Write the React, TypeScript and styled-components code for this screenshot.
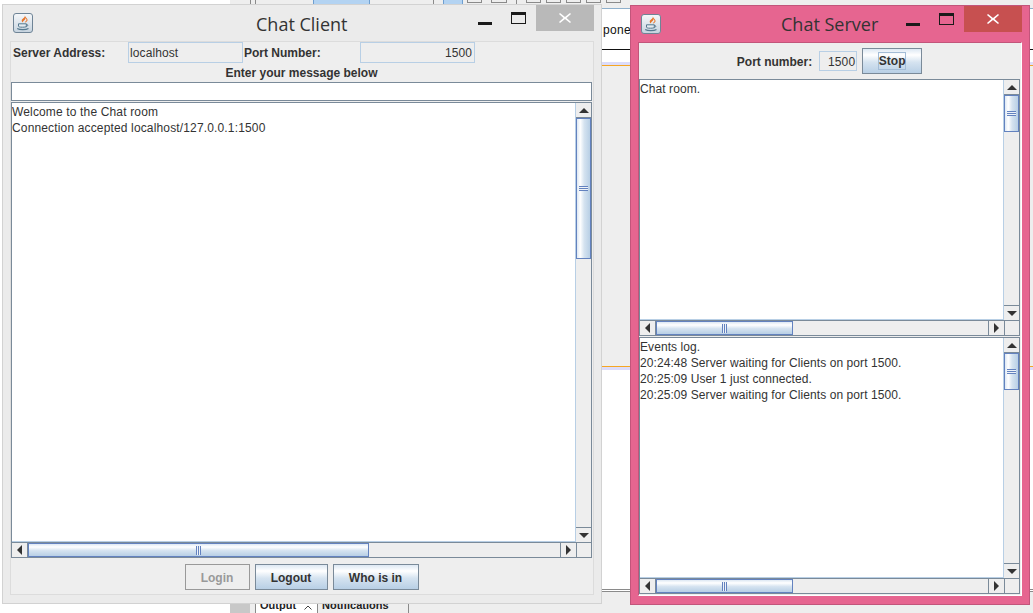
import React, { FC, ReactNode } from 'react';
import styled, { createGlobalStyle } from 'styled-components';

const GlobalStyle = createGlobalStyle`
    html, body {
        margin: 0;
        padding: 0;
        background: #fff;
        overflow: hidden;
    }
    * {
        box-sizing: border-box;
    }
`;

const JavaIcon: FC = () => (
    <svg width="20" height="20" viewBox="0 0 20 20">
        <defs>
            <linearGradient id="javaBg" x1="0" y1="0" x2="0" y2="1">
                <stop offset="0" stopColor="#f6f8fa" />
                <stop offset="1" stopColor="#c6d3df" />
            </linearGradient>
        </defs>
        <rect x="0.5" y="0.5" width="19" height="19" rx="2.500" fill="url(#javaBg)" stroke="#6f8496" />
        <path d="M11.800 2.500c.8 2.200-3.800 3.300-3 5.700.2.600.6 1 1 1.300-.3-1.700 3.600-2.700 2.200-4.800.9 1.300 2 1.800 1.500 2.500-.8 1-1.500 1.500-1.700 2.400 1.500-.5 3.400-1.800 2.600-3.400-.5-1-1.800-1.800-2.600-3.700z" fill="#e8762b" />
        <path d="M5.500 10.800h7.800v2.200c0 .8-1 1.200-3.900 1.200s-3.900-.4-3.900-1.200z" fill="#e4ebf1" stroke="#55798f" strokeWidth="1" />
        <path d="M13.300 11.300c2 0 2 2-.5 2.500" fill="none" stroke="#55798f" strokeWidth="1" />
        <path d="M4.200 15.500c2.500 1.500 8.800 1.500 11.300 0" fill="none" stroke="#55798f" strokeWidth="1.300" />
    </svg>
);

const MinimizeIcon: FC = () => (
    <svg width="14" height="3" viewBox="0 0 14 3">
        <rect width="14" height="3" fill="#1a1a1a" />
    </svg>
);

const MaximizeIcon: FC = () => (
    <svg width="15" height="12" viewBox="0 0 15 12">
        <path d="M0 0h15v12H0zM1 3v8h13V3z" fill="#1a1a1a" fillRule="evenodd" />
    </svg>
);

const CloseIcon: FC = () => (
    <svg width="12" height="10" viewBox="0 0 12 10">
        <path d="M1 0l5 4 5-4 1 1-4.500 4L12 9l-1 1-5-4-5 4-1-1 4.500-4L0 1z" fill="#fff" />
    </svg>
);

const CaretIcon: FC = () => (
    <svg width="8" height="5" viewBox="0 0 8 5">
        <polyline points="0.500,4.500 4,1 7.500,4.500" fill="none" stroke="#444" strokeWidth="1" />
    </svg>
);

type ArrowDir = 'up' | 'down' | 'left' | 'right';

const Arrow: FC<{ dir: ArrowDir }> = ({ dir }) => {
    const points = {
        up: '0,6 5,1 10,6',
        down: '0,1 10,1 5,6',
        left: '6,0 6,10 1,5',
        right: '1,0 1,10 6,5',
    }[dir];
    const vertical = dir === 'up' || dir === 'down';
    return (
        <svg width={vertical ? 10 : 7} height={vertical ? 7 : 10} viewBox={vertical ? '0 0 10 7' : '0 0 7 10'}>
            <polygon points={points} fill="#333" />
        </svg>
    );
};

const ScrollBar: FC<{ vertical?: boolean; thumb: number }> = ({ vertical, thumb }) => (
    <Bar $vertical={vertical}>
        <ArrowButton $vertical={vertical}>
            <Arrow dir={vertical ? 'up' : 'left'} />
        </ArrowButton>
        <Track $vertical={vertical}>
            <Thumb $vertical={vertical} $size={thumb}>
                <Grip $vertical={vertical} />
            </Thumb>
        </Track>
        <ArrowButton $vertical={vertical} $end>
            <Arrow dir={vertical ? 'down' : 'right'} />
        </ArrowButton>
    </Bar>
);

const ScrollArea: FC<{ lines: string[]; vThumb: number; hThumb: number; height: number; tracking: number }> = ({
    lines,
    vThumb,
    hThumb,
    height,
    tracking,
}) => (
    <Pane $height={height}>
        <PaneText $tracking={tracking}>
            {lines.map(line => (
                <div key={line}>{line}</div>
            ))}
        </PaneText>
        <ScrollBar vertical thumb={vThumb} />
        <ScrollBar thumb={hThumb} />
        <Corner />
    </Pane>
);

const TitleBar: FC<{ title: string; active?: boolean; left: number; top: number; minTop: number }> = ({
    title,
    active,
    left,
    top,
    minTop,
}) => (
    <Title>
        <IconSlot>
            <JavaIcon />
        </IconSlot>
        <TitleText $left={left} $top={top}>
            {title}
        </TitleText>
        <WindowControls>
            <MinSlot $top={minTop}>
                <MinimizeIcon />
            </MinSlot>
            <MaxSlot>
                <MaximizeIcon />
            </MaxSlot>
            <CloseSlot $active={active}>
                <CloseIcon />
            </CloseSlot>
        </WindowControls>
    </Title>
);

const Backdrop: FC<{ children?: ReactNode }> = ({ children }) => <IdeLayer>{children}</IdeLayer>;

const App: FC = () => {
    return (
        <Page>
            <GlobalStyle />
            <Backdrop>
                <IdeTop>
                    <TopDivider $gap={20} />
                    <TopDivider $gap={4} />
                    <TopTab />
                    <TopDivider $gap={63} />
                    <TopTab $small />
                    <TopTool $gap={4} $wide={15} />
                    <TopTool $gap={9} $wide={16} />
                    <TopDivider $gap={9} />
                    <TopTool $gap={9} $wide={15} />
                    <TopTool $gap={5} $wide={15} />
                    <TopTool $gap={5} $wide={15} />
                    <TopTool $gap={5} $wide={15} />
                    <TopTool $gap={5} $wide={15} />
                </IdeTop>
                <IdeColumn>
                    <GreyBand $height={8} />
                    <BlueLine />
                    <EditorTop>
                        <Fragment>pone</Fragment>
                    </EditorTop>
                    <BlackLine />
                    <WhiteBand $height={12} />
                    <LavenderBand />
                    <OrangeLine />
                    <GreyBand $height={300} />
                    <OrangeLine />
                    <LavenderBand />
                    <WhiteBand $height={219} />
                    <GreyRule />
                    <WhiteBand $height={1} />
                    <GreyRule />
                    <GreyBand $height={30} />
                </IdeColumn>
                <IdeBottom>
                    <BottomGutter />
                    <OutputTab>
                        Output
                        <CaretIcon />
                    </OutputTab>
                    <NotifyTab>Notifications</NotifyTab>
                </IdeBottom>
            </Backdrop>

            <ClientWindow>
                <TitleBar title="Chat Client" left={246} top={6} minTop={16} />
                <ClientPanel>
                    <FieldGrid>
                        <BoldLabel>Server Address:</BoldLabel>
                        <Field>localhost</Field>
                        <PortNumberLabel>Port Number:</PortNumberLabel>
                        <Field $right>1500</Field>
                    </FieldGrid>
                    <PromptRow>Enter your message below</PromptRow>
                    <MessageInput />
                    <ScrollArea
                        height={456}
                        vThumb={141}
                        hThumb={341}
                        tracking={0.15}
                        lines={['Welcome to the Chat room', 'Connection accepted localhost/127.0.0.1:1500']}
                    />
                    <ButtonRow>
                        <Button $width={65} disabled>
                            Login
                        </Button>
                        <Button $width={73}>Logout</Button>
                        <Button $width={86}>Who is in</Button>
                    </ButtonRow>
                </ClientPanel>
            </ClientWindow>

            <ServerWindow>
                <TitleBar title="Chat Server" active left={143} top={5} minTop={16} />
                <ServerPanel>
                    <PortRow>
                        <PortLabel>Port number:</PortLabel>
                        <PortField>1500</PortField>
                        <Button $width={60}>
                            <FocusRect>Stop</FocusRect>
                        </Button>
                    </PortRow>
                    <ScrollArea height={257} vThumb={37} hThumb={137} tracking={0.08} lines={['Chat room.']} />
                    <PaneGap />
                    <ScrollArea
                        height={257}
                        vThumb={37}
                        hThumb={137}
                        tracking={0.08}
                        lines={[
                            'Events log.',
                            '20:24:48 Server waiting for Clients on port 1500.',
                            '20:25:09 User 1 just connected.',
                            '20:25:09 Server waiting for Clients on port 1500.',
                        ]}
                    />
                </ServerPanel>
            </ServerWindow>
        </Page>
    );
};

const Page = styled.div`
    position: relative;
    width: 1033px;
    height: 613px;
    overflow: hidden;
    background: #fff;
    font-family: 'Liberation Sans', Arial, sans-serif;
    font-size: 12px;
    color: #333;
`;

/* IDE behind the two windows */
const IdeLayer = styled.div`
    position: absolute;
    inset: 0;
`;

const IdeTop = styled.div`
    position: absolute;
    left: 230px;
    top: 0;
    width: 803px;
    height: 4px;
    background: #eeeeee;
    display: flex;
    z-index: 1;
`;

const TopDivider = styled.div<{ $gap: number }>`
    width: 1px;
    margin-left: ${p => p.$gap}px;
    background: #8a8a8a;
`;

const TopTab = styled.div<{ $small?: boolean }>`
    width: ${p => (p.$small ? 20 : 57)}px;
    margin-left: ${p => (p.$small ? 9 : 57)}px;
    background: #b3d3f2;
    border-left: 1px solid #6f9fd0;
    border-right: 1px solid #6f9fd0;
`;

const TopTool = styled.div<{ $gap: number; $wide: number }>`
    width: ${p => p.$wide}px;
    height: 3px;
    margin-left: ${p => p.$gap}px;
    border: 1px solid #8a8a8a;
    border-top: none;
`;

const IdeColumn = styled.div`
    position: absolute;
    left: 600px;
    top: 0;
    width: 433px;
    display: flex;
    flex-direction: column;
`;

const GreyBand = styled.div<{ $height: number }>`
    height: ${p => p.$height}px;
    background: #eeeeee;
`;

const WhiteBand = styled.div<{ $height: number }>`
    height: ${p => p.$height}px;
    background: #fff;
`;

const BlueLine = styled.div`
    height: 1px;
    background: #8fb0cc;
`;

const EditorTop = styled.div`
    height: 40px;
    padding: 13px 0 0 3px;
    background: #fff;
`;

const Fragment = styled.span`
    font-size: 12px;
    line-height: 16px;
    color: #111;
    letter-spacing: 0.3px;
`;

const BlackLine = styled.div`
    height: 1px;
    background: #111;
`;

const LavenderBand = styled.div`
    height: 3px;
    background: #dcdcfa;
`;

const OrangeLine = styled.div`
    height: 1px;
    background: #f5a623;
`;

const GreyRule = styled.div`
    height: 1px;
    background: #8a8a8a;
`;

const IdeBottom = styled.div`
    position: absolute;
    left: 230px;
    top: 598px;
    width: 400px;
    height: 15px;
    overflow: hidden;
    background: #eeeeee;
    display: flex;
`;

const BottomGutter = styled.div`
    width: 20px;
    background: #c8c8c8;
`;

const OutputTab = styled.div`
    width: 63px;
    margin-left: 5px;
    padding: 1px 0 0 4px;
    background: #fff;
    border-left: 1px solid #8a8a8a;
    border-right: 1px solid #8a8a8a;
    font-size: 11px;
    font-weight: bold;
    color: #222;
    display: flex;
    align-items: flex-start;

    svg {
        margin: 6px 0 0 8px;
    }
`;

const NotifyTab = styled.div`
    width: 90px;
    margin-left: 1px;
    padding: 1px 0 0 3px;
    border-right: 1px solid #8a8a8a;
    font-size: 11px;
    font-weight: bold;
    color: #222;
`;

/* Windows */
const ClientWindow = styled.div`
    position: absolute;
    left: 2px;
    top: 4px;
    width: 600px;
    height: 600px;
    padding: 0 7px 8px;
    background: #ebebeb;
    border: 1px solid #d2d2d2;
    display: flex;
    flex-direction: column;
`;

const ServerWindow = styled.div`
    position: absolute;
    left: 630px;
    top: 5px;
    width: 400px;
    height: 600px;
    padding: 0 7px 8px;
    background: #e66590;
    border: 1px solid #c2557b;
    display: flex;
    flex-direction: column;
`;

const Title = styled.div`
    position: relative;
    height: 36px;
    flex: none;
`;

const IconSlot = styled.div`
    position: absolute;
    left: 3px;
    top: 8px;
    line-height: 0;
`;

const TitleText = styled.div<{ $left: number; $top: number }>`
    position: absolute;
    left: ${p => p.$left}px;
    top: ${p => p.$top}px;
    font-family: 'Open Sans', 'Noto Sans', sans-serif;
    font-size: 18px;
    line-height: 26px;
    color: #333;
`;

const WindowControls = styled.div`
    position: absolute;
    right: 0;
    top: 0;
    display: flex;
    align-items: flex-start;
`;

const MinSlot = styled.div<{ $top: number }>`
    width: 33px;
    padding-top: ${p => p.$top}px;
    line-height: 0;
`;

const MaxSlot = styled.div`
    width: 25px;
    padding-top: 7px;
    line-height: 0;
`;

const CloseSlot = styled.div<{ $active?: boolean }>`
    width: 58px;
    height: 26px;
    background: ${p => (p.$active ? '#c75050' : '#b9b9b9')};
    display: flex;
    align-items: center;
    justify-content: center;
`;

const ClientPanel = styled.div`
    flex: 1;
    padding: 0 1px 0 0;
    background: #eeeeee;
    border: 1px solid #dcdcdc;
    display: flex;
    flex-direction: column;
`;

const ServerPanel = styled.div`
    flex: 1;
    padding: 1px 1px 0 0;
    background: #eeeeee;
    border: 1px solid #fff;
    border-left-color: #c2557b;
    border-top-color: #c2557b;
    display: flex;
    flex-direction: column;
`;

const FieldGrid = styled.div`
    display: grid;
    grid-template-columns: 117px 115px 117px 115px;
    height: 20px;
    flex: none;
`;

const BoldLabel = styled.div`
    padding: 1px 0 0 2px;
    font-weight: bold;
    line-height: 20px;
    white-space: nowrap;
`;

const PortNumberLabel = styled(BoldLabel)`
    padding-left: 1px;
`;

const PortLabel = styled(BoldLabel)`
    padding: 2px 2px 0 0;
`;

const Field = styled.div<{ $right?: boolean }>`
    padding: 1px 2px 0 1px;
    background: #eeeeee;
    border: 1px solid #b8cfe5;
    line-height: 18px;
    text-align: ${p => (p.$right ? 'right' : 'left')};
    letter-spacing: 0.1px;
`;

const PromptRow = styled.div`
    height: 20px;
    padding-top: 1px;
    flex: none;
    font-weight: bold;
    line-height: 20px;
    text-align: center;
`;

const MessageInput = styled.div`
    height: 19px;
    margin-bottom: 1px;
    flex: none;
    background: #fff;
    border: 1px solid #7a8a99;
`;

const Pane = styled.div<{ $height: number }>`
    height: ${p => p.$height}px;
    flex: none;
    border: 1px solid #7a8a99;
    background: #fff;
    display: grid;
    grid-template-columns: 1fr 15px;
    grid-template-rows: 1fr 15px;
`;

const PaneText = styled.div<{ $tracking: number }>`
    padding: 1px 0 0 0;
    line-height: 16px;
    letter-spacing: ${p => p.$tracking}px;
    white-space: nowrap;
    overflow: hidden;
    border-right: 1px solid #b8cfe5;
    border-bottom: 1px solid #b8cfe5;
`;

const Corner = styled.div`
    background: #eeeeee;
    border-top: 1px solid #7a8a99;
    border-left: 1px solid #7a8a99;
`;

const Bar = styled.div<{ $vertical?: boolean }>`
    display: flex;
    flex-direction: ${p => (p.$vertical ? 'column' : 'row')};
    background: #eeeeee;
    min-width: 0;
    min-height: 0;
    ${p => (p.$vertical ? '' : 'border-top: 1px solid #7a8a99;')}
`;

const ArrowButton = styled.div<{ $vertical?: boolean; $end?: boolean }>`
    flex: none;
    ${p => (p.$vertical ? 'height: 15px;' : 'width: 16px;')}
    background: #eeeeee;
    display: flex;
    align-items: center;
    justify-content: center;
    ${p =>
        p.$vertical
            ? `border-${p.$end ? 'top' : 'bottom'}: 1px solid #7a8a99;`
            : `border-${p.$end ? 'left' : 'right'}: 1px solid #7a8a99;`}
`;

const Track = styled.div<{ $vertical?: boolean }>`
    flex: 1;
    min-width: 0;
    min-height: 0;
    display: flex;
    flex-direction: ${p => (p.$vertical ? 'column' : 'row')};
`;

const Thumb = styled.div<{ $vertical?: boolean; $size: number }>`
    flex: none;
    ${p => (p.$vertical ? `height: ${p.$size}px;` : `width: ${p.$size}px;`)}
    border: 1px solid #6382bf;
    background: linear-gradient(
        ${p => (p.$vertical ? 'to right' : 'to bottom')},
        #dde8f3 0%,
        #ffffff 25%,
        #d5e3f0 55%,
        #b8cfe5 100%
    );
    display: flex;
    align-items: center;
    justify-content: center;
`;

const Grip = styled.div<{ $vertical?: boolean }>`
    ${p => (p.$vertical ? 'width: 9px; height: 5px;' : 'width: 5px; height: 9px;')}
    background: repeating-linear-gradient(
        ${p => (p.$vertical ? 'to bottom' : 'to right')},
        #6382bf 0,
        #6382bf 1px,
        #eef3f8 1px,
        #eef3f8 2px
    );
`;

const ButtonRow = styled.div`
    flex: 1;
    padding-top: 6px;
    display: flex;
    justify-content: center;
    align-items: flex-start;
    gap: 5px;
`;

const Button = styled.button<{ $width: number }>`
    width: ${p => p.$width}px;
    height: 26px;
    padding: 1px 0 0;
    border: 1px solid #7a8a99;
    background: linear-gradient(to bottom, #dde8f3 0%, #ffffff 25%, #d5e3f0 55%, #b8cfe5 100%);
    font-family: 'Liberation Sans', Arial, sans-serif;
    font-size: 12px;
    font-weight: bold;
    color: #333;
    display: inline-flex;
    align-items: center;
    justify-content: center;

    &:disabled {
        background: #eeeeee;
        border-color: #999;
        color: #999;
    }
`;

const FocusRect = styled.span`
    width: 28px;
    height: 18px;
    border: 1px solid #a3bcd6;
    display: flex;
    align-items: center;
    justify-content: center;
`;

const PortRow = styled.div`
    height: 35px;
    flex: none;
    display: flex;
    align-items: center;
    justify-content: center;
    gap: 5px;
    padding-bottom: 2px;
`;

const PortField = styled.div`
    width: 38px;
    height: 20px;
    padding: 1px 1px 0;
    background: #eeeeee;
    border: 1px solid #b8cfe5;
    line-height: 18px;
    text-align: right;
    letter-spacing: 0.1px;
`;

const PaneGap = styled.div`
    height: 1px;
    flex: none;
`;

export default App;
